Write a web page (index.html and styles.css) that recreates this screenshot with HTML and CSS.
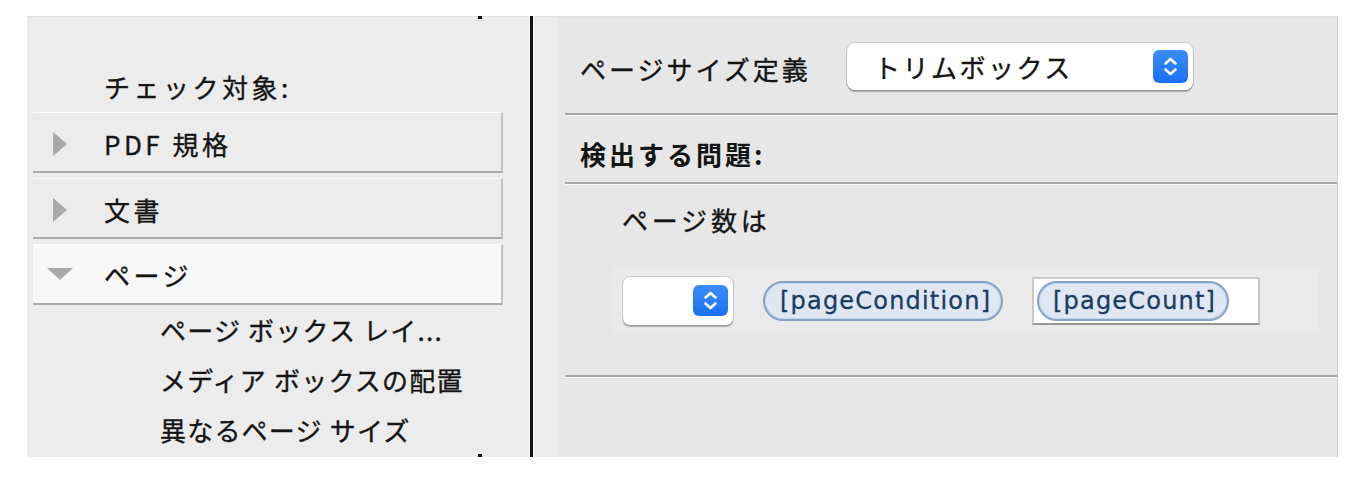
FILE: index.html
```html
<!DOCTYPE html>
<html lang="ja">
<head>
<meta charset="utf-8">
<title>プリフライト</title>
<link rel="stylesheet" href="styles.css">
</head>
<body>
<div class="frame">
  <aside class="left">
    <div class="left-head">チェック対象:</div>
    <div class="row"><span class="tri-r"></span><span class="row-label">PDF 規格</span></div>
    <div class="row"><span class="tri-r"></span><span class="row-label">文書</span></div>
    <div class="row open"><span class="tri-d"></span><span class="row-label">ページ</span></div>
    <ul class="subs">
      <li>ページ ボックス レイ...</li>
      <li>メディア ボックスの配置</li>
      <li>異なるページ サイズ</li>
    </ul>
  </aside>
  <div class="divider"></div>
  <section class="right">
    <div class="strip"></div>
    <div class="content">
      <div class="sec-top">
        <div class="field-label">ページサイズ定義</div>
        <div class="popup popup-main">
          <span class="popup-text">トリムボックス</span>
          <span class="stepper">
            <svg viewBox="0 0 35 33" width="35" height="33"><path d="M12.5 13.5 L17.5 9 L22.5 13.5 M12.5 19.5 L17.5 24 L22.5 19.5" fill="none" stroke="#fff" stroke-width="2.6" stroke-linecap="round" stroke-linejoin="round"/></svg>
          </span>
        </div>
      </div>
      <div class="sep"></div>
      <div class="sec-issues">検出する問題:</div>
      <div class="sep"></div>
      <div class="sec-pages">
        <div class="pages-label">ページ数は</div>
        <div class="band">
          <div class="popup popup-small">
            <span class="stepper stepper-small">
              <svg viewBox="0 0 35 31" width="35" height="31"><path d="M12.5 12.5 L17.5 8 L22.5 12.5 M12.5 18.5 L17.5 23 L22.5 18.5" fill="none" stroke="#fff" stroke-width="2.6" stroke-linecap="round" stroke-linejoin="round"/></svg>
            </span>
          </div>
          <span class="token token-cond">[pageCondition]</span>
          <div class="textfield"><span class="token token-count">[pageCount]</span></div>
        </div>
      </div>
      <div class="sep"></div>
    </div>
  </section>
</div>
</body>
</html>
```
FILE: styles.css
```css
* { box-sizing: border-box; }
html, body { margin: 0; padding: 0; background: #ffffff; }
body {
  font-family: "Noto Sans CJK JP", "Noto Sans", sans-serif;
  color: #141414;
  -webkit-text-stroke: 0.35px #141414;
}
.frame {
  margin: 16px 0 0 27px;
  width: 1311px;
  height: 441px;
  display: flex;
  overflow: hidden;
}

/* left panel */
.left {
  position: relative;
  width: 502px;
  flex: none;
  background: #ececec;
  border-top: 1px solid #e2e2e2;
}
.left::before, .left::after {
  content: "";
  position: absolute;
  left: 451px;
  width: 4px;
  height: 3px;
  background: #111;
}
.left::before { top: -1px; }
.left::after { bottom: 0; }
.left-head {
  padding: 53px 0 0 77px;
  height: 95px;
  font-size: 26px;
  line-height: 34px;
  letter-spacing: 3.5px;
}
.row {
  margin-left: 6px;
  width: 470px;
  height: 61px;
  margin-bottom: 5px;
  display: flex;
  align-items: center;
  padding-top: 3px;
  background: #ececec;
  border-top: 1px solid #fbfbfb;
  border-bottom: 2px solid #ababab;
  border-right: 2px solid #c4c4c4;
  font-size: 26px;
  letter-spacing: 3.5px;
}
.row.open { background: #f8f8f8; margin-bottom: 0; padding-top: 0; }
.tri-r {
  width: 0; height: 0;
  margin-left: 20px;
  border-top: 12px solid transparent;
  border-bottom: 12px solid transparent;
  border-left: 14px solid #a9a9a9;
}
.tri-r + .row-label { margin-left: 37px; }
.tri-d {
  width: 0; height: 0;
  margin-left: 14px;
  border-left: 13px solid transparent;
  border-right: 13px solid transparent;
  border-top: 12px solid #a9a9a9;
}
.tri-d + .row-label { margin-left: 31px; }
.subs {
  list-style: none;
  margin: 0;
  padding: 0 0 0 133px;
  font-size: 26px;
  line-height: 50px;
  letter-spacing: 1.2px;
  white-space: nowrap;
}

/* divider */
.divider {
  width: 5px;
  flex: none;
  background: #111;
  border-left: 1px solid #fafafa;
  border-right: 1px solid #fafafa;
}

/* right panel */
.right {
  flex: 1;
  display: flex;
  border-right: 1px solid #cfcfcf;
  border-top: 1px solid #e2e2e2;
}
.strip { width: 23px; flex: none; background: #ececec; }
.content { flex: 1; background: #e7e7e7; }
.sep {
  margin-left: 8px;
  height: 3px;
  border-top: 2px solid #a6a6a6;
  border-bottom: 1px solid #fbfbfb;
}
.sec-top {
  height: 96px;
  display: flex;
  align-items: center;
  padding: 2px 0 0 23px;
}
.field-label {
  width: 267px;
  flex: none;
  font-size: 26px;
  letter-spacing: 3px;
  padding-top: 4px;
}
.popup {
  background: #ffffff;
  border-radius: 8px;
  box-shadow: 0 0 0 1px rgba(0,0,0,0.10), 0 1.5px 1.5px rgba(0,0,0,0.28);
  display: flex;
  align-items: center;
}
.popup-main {
  width: 346px;
  height: 47px;
  padding: 0 5px 0 27px;
}
.popup-text {
  flex: 1;
  font-size: 26px;
  letter-spacing: 2.5px;
}
.stepper {
  width: 35px;
  height: 33px;
  border-radius: 6px;
  background: linear-gradient(#3b8cfb, #1a70f2);
  display: flex;
}
.stepper svg { display: block; }
.sec-issues {
  height: 66px;
  padding: 22px 0 0 23px;
  font-size: 26px;
  line-height: 32px;
  font-weight: bold;
  letter-spacing: 3px;
  -webkit-text-stroke: 0;
}
.sec-pages {
  height: 190px;
  padding: 18px 0 0 65px;
}
.pages-label {
  font-size: 26px;
  line-height: 34px;
  letter-spacing: 3.8px;
}
.band {
  margin: 31px 0 0 -10px;
  width: 706px;
  height: 65px;
  background: #eaeaea;
  display: flex;
  align-items: center;
  padding-left: 11px;
}
.popup-small {
  width: 110px;
  height: 48px;
  justify-content: flex-end;
  padding-right: 5px;
  border-radius: 7px;
}
.stepper-small { height: 31px; }
.token {
  display: inline-flex;
  align-items: center;
  height: 40px;
  border: 2px solid #86a3c7;
  box-shadow: inset 0 0 0 1px #c6d5e6;
  border-radius: 20px;
  background: #dfe8f2;
  color: #1b3b63;
  -webkit-text-stroke: 0.3px #1b3b63;
  font-family: "DejaVu Sans", sans-serif;
  font-size: 24px;
  letter-spacing: 1.2px;
}
.token-cond {
  margin-left: 30px;
  width: 240px;
  padding-left: 15px;
}
.textfield {
  margin-left: 29px;
  width: 228px;
  height: 48px;
  background: #ffffff;
  border: 2px solid #c9c9c9;
  border-bottom-color: #979797;
  display: flex;
  align-items: center;
  padding-left: 3px;
}
.token-count {
  width: 192px;
  padding-left: 14px;
}
```
